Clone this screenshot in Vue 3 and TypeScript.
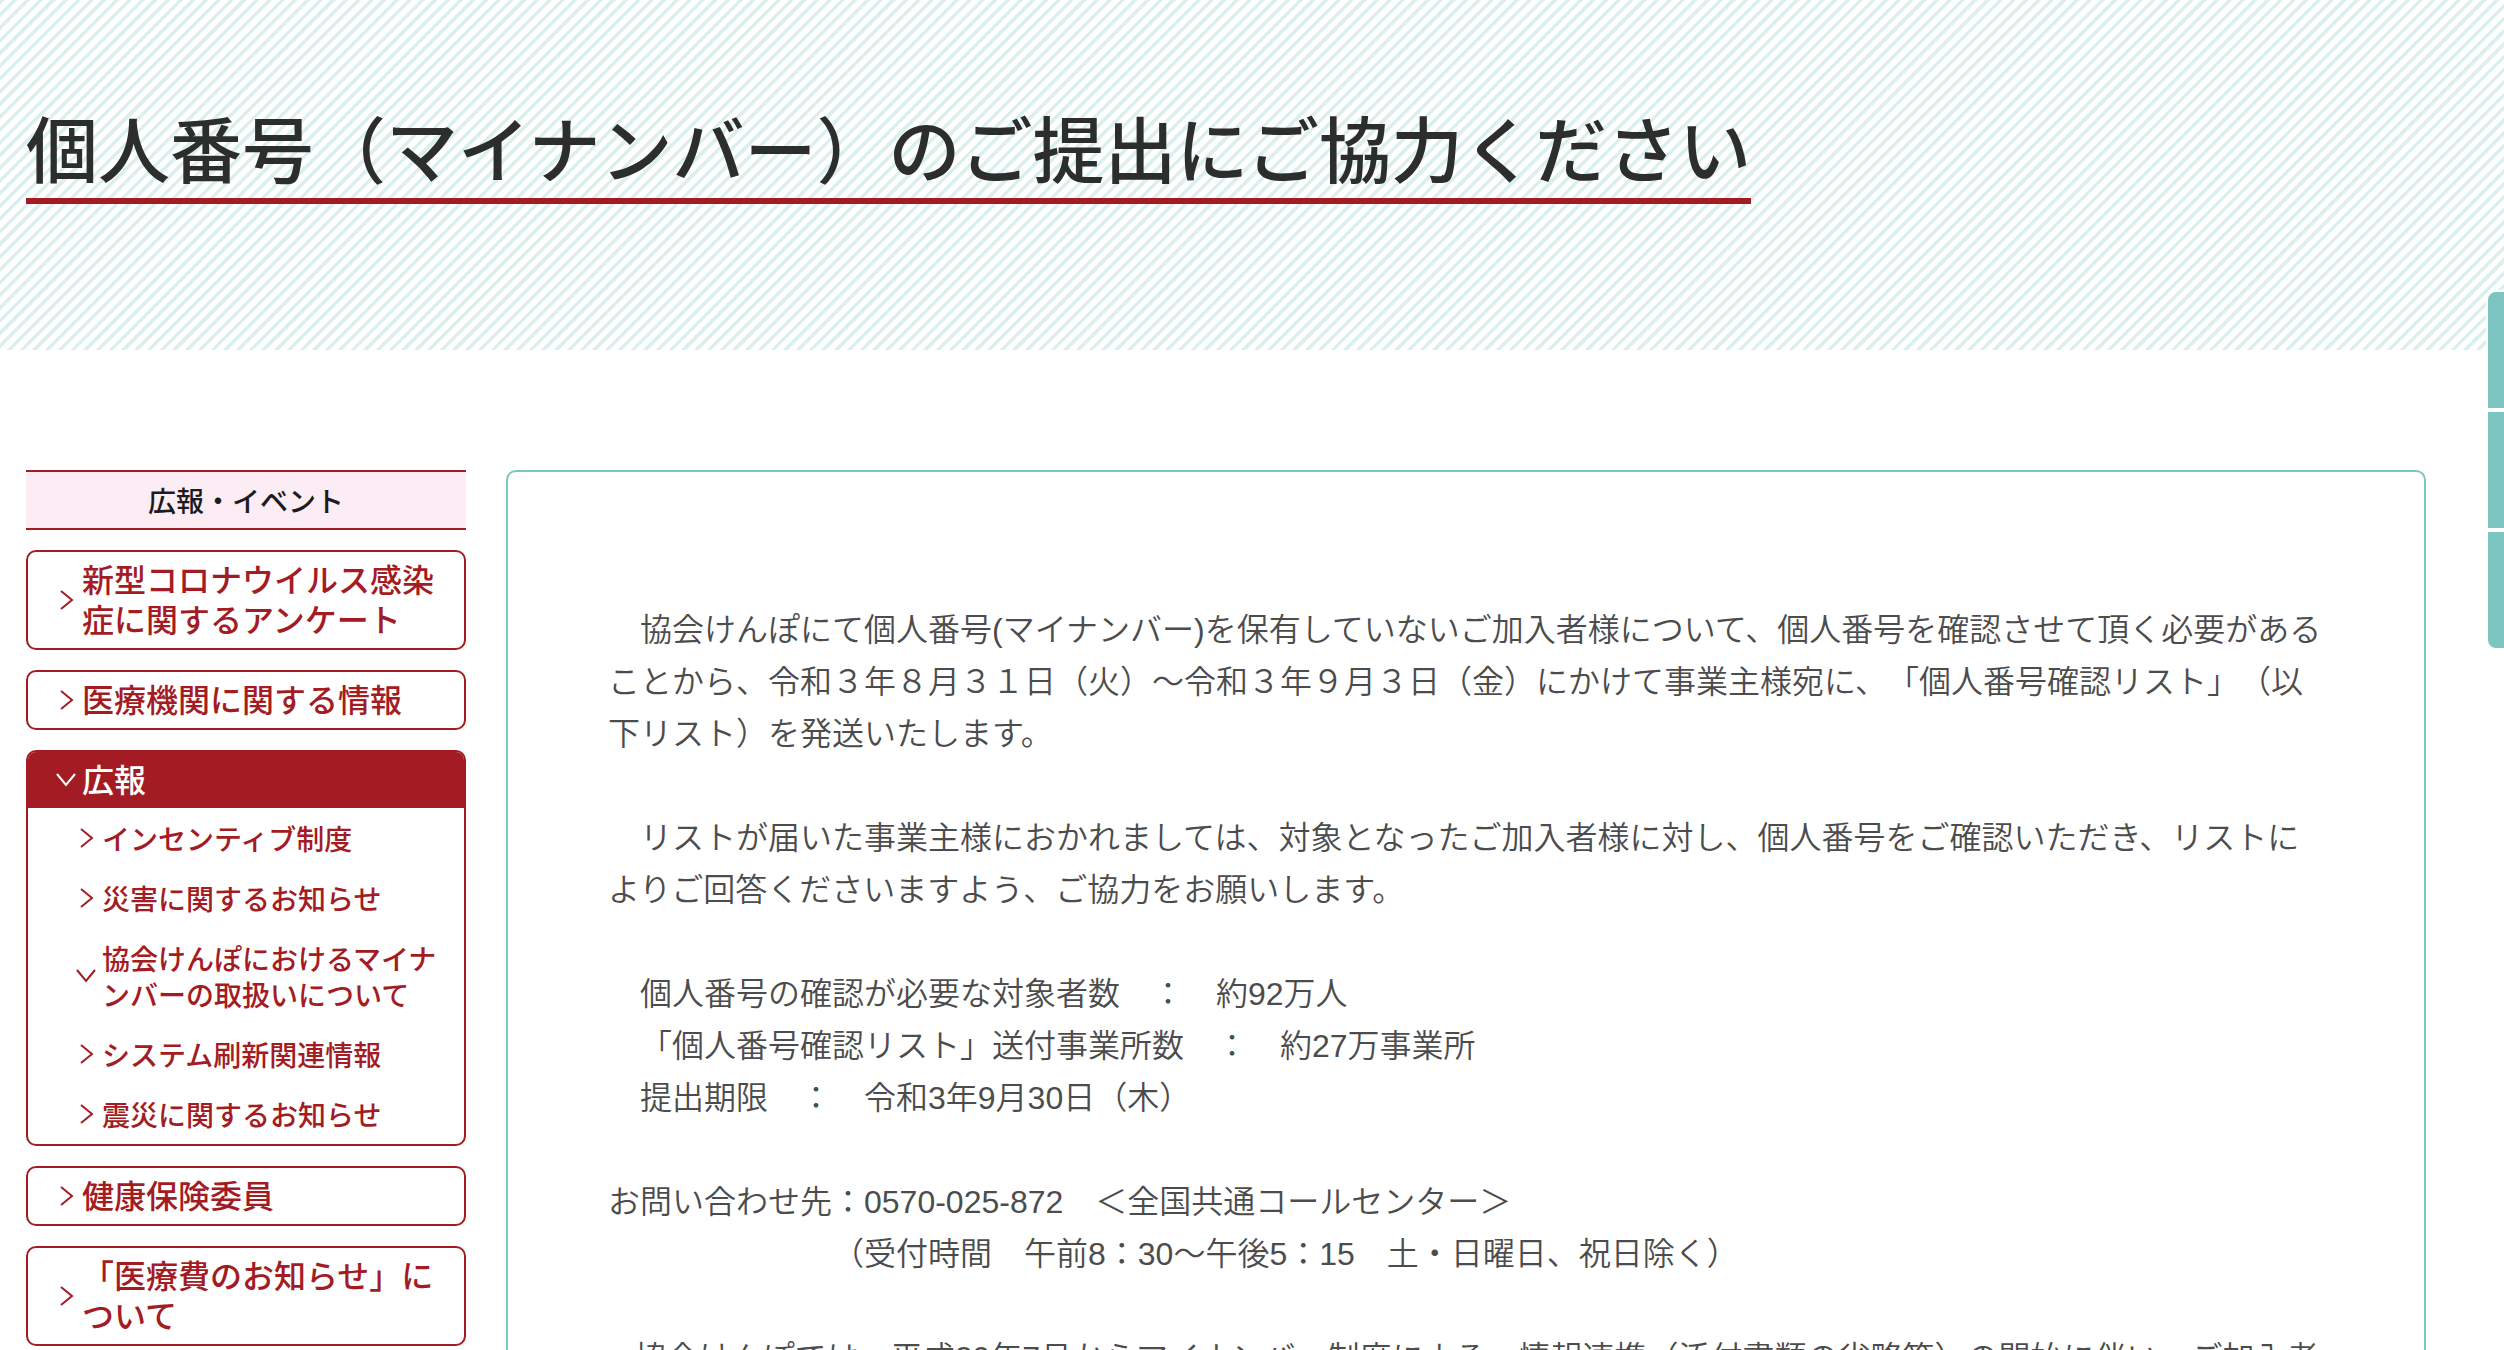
<script setup lang="ts">
interface MenuItem {
  label: string
  open?: boolean
  children?: MenuItem[]
}

const title = '個人番号（マイナンバー）のご提出にご協力ください'
const menuTitle = '広報・イベント'

const menu: MenuItem[] = [
  { label: '新型コロナウイルス感染症に関するアンケート' },
  { label: '医療機関に関する情報' },
  {
    label: '広報',
    open: true,
    children: [
      { label: 'インセンティブ制度' },
      { label: '災害に関するお知らせ' },
      { label: '協会けんぽにおけるマイナンバーの取扱いについて', open: true },
      { label: 'システム刷新関連情報' },
      { label: '震災に関するお知らせ' },
    ],
  },
  { label: '健康保険委員' },
  { label: '「医療費のお知らせ」について' },
]

const paragraphs: string[] = [
  '　協会けんぽにて個人番号(マイナンバー)を保有していないご加入者様について、個人番号を確認させて頂く必要があることから、令和３年８月３１日（火）～令和３年９月３日（金）にかけて事業主様宛に、「個人番号確認リスト」（以下リスト）を発送いたします。',
  '　リストが届いた事業主様におかれましては、対象となったご加入者様に対し、個人番号をご確認いただき、リストによりご回答くださいますよう、ご協力をお願いします。',
  '　個人番号の確認が必要な対象者数　：　約92万人\n　「個人番号確認リスト」送付事業所数　：　約27万事業所\n　提出期限　：　令和3年9月30日（木）',
  'お問い合わせ先：0570-025-872　＜全国共通コールセンター＞\n　　　　　　　（受付時間　午前8：30～午後5：15　土・日曜日、祝日除く）',
  '\u00a0\u00a0\u00a0協会けんぽでは、平成29年7月からマイナンバー制度による、情報連携（添付書類の省略等）の開始に伴い、ご加入者',
]

const RIGHT = 'M7 3 L18 12 L7 21'
const DOWN = 'M3 6 L12 17 L21 6'
</script>

<template>
  <div class="page">
    <header class="banner">
      <h1 class="title">{{ title }}</h1>
    </header>

    <div class="columns">
      <nav class="side">
        <h2 class="side-title">{{ menuTitle }}</h2>
        <ul class="menu">
          <li v-for="item in menu" :key="item.label" class="card">
            <a href="#" class="entry" :class="{ current: item.open }">
              <svg class="chevron" viewBox="0 0 24 24"><path :d="item.open ? DOWN : RIGHT" /></svg>
              <span class="label">{{ item.label }}</span>
            </a>
            <ul v-if="item.children" class="submenu">
              <li v-for="child in item.children" :key="child.label">
                <a href="#" class="entry sub">
                  <svg class="chevron" viewBox="0 0 24 24"><path :d="child.open ? DOWN : RIGHT" /></svg>
                  <span>{{ child.label }}</span>
                </a>
              </li>
            </ul>
          </li>
        </ul>
      </nav>

      <main class="article">
        <p v-for="text in paragraphs" :key="text">{{ text }}</p>
      </main>
    </div>

    <div class="tabs">
      <div v-for="n in 3" :key="n" class="tab"></div>
    </div>
  </div>
</template>

<style>
body {
  margin: 0;
  background: #fff;
}
</style>

<style scoped>
.page {
  position: relative;
  height: 100vh;
  overflow: hidden;
  font-family: "Noto Sans CJK JP", sans-serif;
  text-spacing-trim: space-all;
}

.banner {
  box-sizing: border-box;
  height: 350px;
  padding: 102px 26px 0;
  background: repeating-linear-gradient(135deg, #dbefec 0, #dbefec 3px, #fff 4px, #fff 9px);
}

.title {
  display: inline-block;
  margin: 0;
  padding-bottom: 8px;
  border-bottom: 6px solid #a41c23;
  color: #2c2e2d;
  font-size: 72px;
  font-weight: 500;
  line-height: 88px;
}

.columns {
  display: flex;
  align-items: flex-start;
  gap: 40px;
  padding: 120px 78px 0 26px;
}

.side {
  flex: 0 0 440px;
}

.side-title {
  margin: 0 0 20px;
  border-top: 2px solid #a41c23;
  border-bottom: 2px solid #a41c23;
  background: #fcecf4;
  color: #1c1c1c;
  font-size: 28px;
  font-weight: 500;
  line-height: 56px;
  text-align: center;
}

.menu,
.submenu {
  margin: 0;
  padding: 0;
  list-style: none;
}

.menu {
  display: flex;
  flex-direction: column;
  gap: 20px;
}

.card {
  border: 2px solid #a41c23;
  border-radius: 10px;
  overflow: hidden;
}

.entry {
  display: flex;
  align-items: center;
  gap: 4px;
  padding: 6px 20px 6px 26px;
  color: #a41c23;
  font-size: 32px;
  font-weight: 500;
  line-height: 40px;
  text-decoration: none;
}

.label {
  padding-bottom: 4px;
}

.current {
  background: #a41c23;
  color: #fff;
}

.sub {
  padding: 12px 20px 12px 46px;
  font-size: 28px;
  line-height: 36px;
}

.chevron {
  flex: none;
  width: 24px;
  height: 24px;
  fill: none;
  stroke: currentColor;
  stroke-width: 2;
}

.article {
  flex: 1;
  box-sizing: border-box;
  min-width: 0;
  padding: 132px 100px 100px;
  border: 2px solid #7cc5c0;
  border-radius: 10px;
  color: #4c4c4c;
  font-family: "Liberation Sans", "Noto Sans CJK JP DemiLight", "Noto Sans CJK JP", sans-serif;
  font-size: 32px;
  font-weight: 400;
  line-height: 52px;
}

.article p {
  margin: 0 0 52px;
  white-space: pre-wrap;
}

.tabs {
  position: absolute;
  top: 290px;
  right: 0;
  width: 18px;
}

.tab {
  box-sizing: border-box;
  height: 120px;
  border: 2px solid #fff;
  border-right: 0;
  background: #7cc5c0;
}

.tab:first-child {
  border-top-left-radius: 10px;
}

.tab:last-child {
  border-bottom-left-radius: 10px;
}
</style>
